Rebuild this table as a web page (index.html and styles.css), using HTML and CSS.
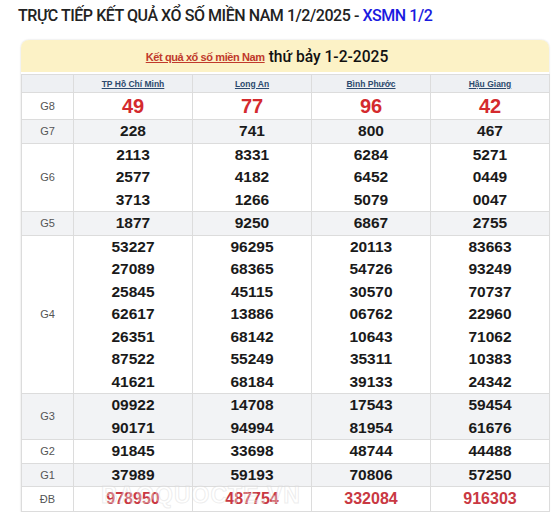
FILE: index.html
```html
<!DOCTYPE html>
<html lang="vi">
<head>
<meta charset="utf-8">
<title>XSMN 1/2/2025</title>
<link rel="stylesheet" href="styles.css">
</head>
<body>
<h2 class="title">TRỰC TIẾP KẾT QUẢ XỔ SỐ MIỀN NAM 1/2/2025 - <span class="title-link">XSMN 1/2</span></h2>
<div class="widget">
  <div class="widget-head"><a class="head-link" href="#">Kết quả xổ số miền Nam</a> <span class="head-date">thứ bảy 1-2-2025</span></div>
  <table class="results">
    <colgroup><col class="c-label"><col class="c-prov"><col class="c-prov"><col class="c-prov"><col class="c-prov"></colgroup>
    <thead>
      <tr class="row-head"><th></th><th><a href="#">TP Hồ Chí Minh</a></th><th><a href="#">Long An</a></th><th><a href="#">Bình Phước</a></th><th><a href="#">Hậu Giang</a></th></tr>
    </thead>
    <tbody>
      <tr class="row-g8"><td class="lbl">G8</td><td>49</td><td>77</td><td>96</td><td>42</td></tr>
      <tr class="row-alt"><td class="lbl">G7</td><td>228</td><td>741</td><td>800</td><td>467</td></tr>
      <tr><td class="lbl">G6</td><td>2113<br>2577<br>3713</td><td>8331<br>4182<br>1266</td><td>6284<br>6452<br>5079</td><td>5271<br>0449<br>0047</td></tr>
      <tr class="row-alt"><td class="lbl">G5</td><td>1877</td><td>9250</td><td>6867</td><td>2755</td></tr>
      <tr><td class="lbl">G4</td><td>53227<br>27089<br>25845<br>62617<br>26351<br>87522<br>41621</td><td>96295<br>68365<br>45115<br>13886<br>68142<br>55249<br>68184</td><td>20113<br>54726<br>30570<br>06762<br>10643<br>35311<br>39133</td><td>83663<br>93249<br>70737<br>22960<br>71062<br>10383<br>24342</td></tr>
      <tr class="row-alt"><td class="lbl">G3</td><td>09922<br>90171</td><td>14708<br>94994</td><td>17543<br>81954</td><td>59454<br>61676</td></tr>
      <tr><td class="lbl">G2</td><td>91845</td><td>33698</td><td>48744</td><td>44488</td></tr>
      <tr class="row-alt"><td class="lbl">G1</td><td>37989</td><td>59193</td><td>70806</td><td>57250</td></tr>
      <tr class="row-db"><td class="lbl">ĐB</td><td>978950</td><td>487754</td><td>332084</td><td>916303</td></tr>
    </tbody>
  </table>
  <div class="watermark">BAOQUOCTE.VN</div>
</div>
</body>
</html>
```
FILE: styles.css
```css
* { box-sizing: border-box; }
html, body { margin: 0; padding: 0; background: #fff; }
body { font-family: "Liberation Sans", Arial, sans-serif; color: #222; }

.title {
  margin: 0;
  padding: 5px 0 0 18px;
  font-family: Roboto, "Liberation Sans", sans-serif;
  font-weight: 500;
  font-size: 16px;
  letter-spacing: -0.45px;
  line-height: 22px;
  color: #222;
}
.title-link { color: #1a1ae0; }

.widget {
  position: relative;
  margin: 13px 0 0 21px;
  width: 528px;
  box-shadow: 0 0 2px rgba(0,0,0,0.18);
  border-radius: 8px 8px 0 0;
  background: #fff;
}
.widget-head {
  height: 32px;
  margin-bottom: 2px;
  background: #fcf2c6;
  border-radius: 8px 8px 0 0;
  display: flex;
  align-items: center;
  justify-content: center;
  gap: 4px;
  padding-top: 1px;
  padding-right: 36px;
}
.head-link {
  color: #c0392b;
  font-size: 11px;
  text-decoration: underline;
  font-weight: bold;
  letter-spacing: -0.4px;
}
.head-date {
  font-family: Roboto, "Liberation Sans", sans-serif;
  font-weight: 500;
  font-size: 15.6px;
  color: #111;
}

.results {
  width: 528px;
  border-collapse: collapse;
  table-layout: fixed;
}
.c-label { width: 52px; }
.c-prov { width: 119px; }

.results th, .results td {
  border: 1px solid #dcdcdc;
  padding: 0;
  text-align: center;
}
.row-head th {
  height: 18px;
  background: #eef0f3;
  font-size: 8.5px;
  font-weight: bold;
  line-height: 16px;
}
.row-head a { color: #2c4a6e; text-decoration: underline; }

.results td {
  font-size: 15.5px;
  font-weight: bold;
  line-height: 22.5px;
  color: #1a1a1a;
}
.results td.lbl {
  font-size: 11px;
  font-weight: normal;
  color: #555;
}
.row-alt td { background: #f2f3f5; }
.row-g8 td {
  height: 27px;
  font-size: 20px;
  color: #d42a2e;
}
.row-db td {
  height: 25px;
  font-size: 16px;
  color: #c93842;
}
.row-g8 td.lbl, .row-db td.lbl { font-size: 11px; color: #555; }

.watermark {
  position: absolute;
  left: 80px;
  bottom: 3px;
  font-size: 23px;
  font-weight: bold;
  color: rgba(255,255,255,0.3);
  -webkit-text-stroke: 1px rgba(210,210,210,0.4);
  letter-spacing: 1px;
  pointer-events: none;
}
```
